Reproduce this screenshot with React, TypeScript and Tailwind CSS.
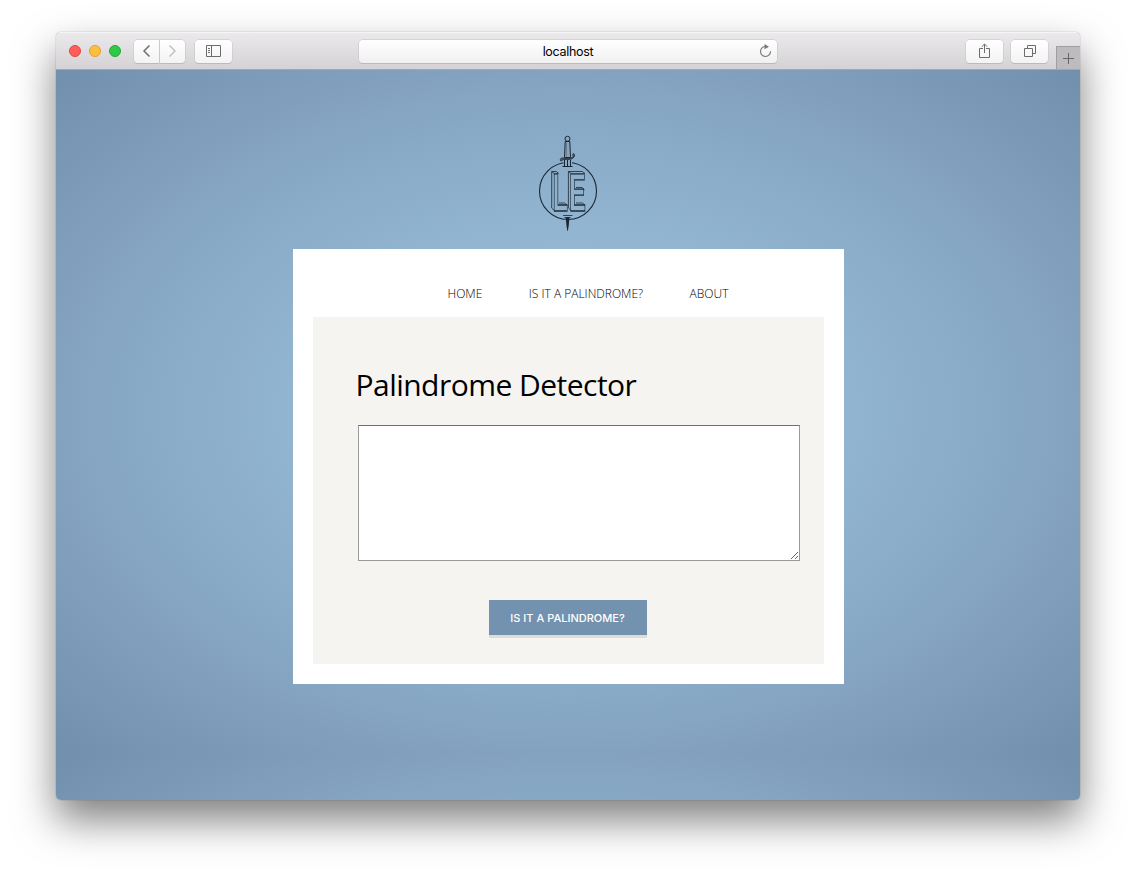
import type { ReactNode } from "react";

function ToolButton({ className, children }: { className: string; children: ReactNode }) {
  return (
    <button
      className={`flex h-[23px] items-center justify-center bg-linear-to-b from-white to-[#f3f3f3] shadow-[0_0_0_0.5px_#c4c2c4,0_1px_0_#b5b3b5] ${className}`}
    >
      {children}
    </button>
  );
}

function Toolbar() {
  return (
    <header className="flex h-[38px] shrink-0 items-center border-t border-b border-t-[#f6f5f6] border-b-[#a9a5a9] bg-linear-to-b from-[#ebe9eb] to-[#d4d2d4] pl-[13px]">
      <div className="flex w-[65px] gap-2">
        <span className="size-3 rounded-full border border-[#e2463f] bg-[#ff5f58]" />
        <span className="size-3 rounded-full border border-[#dfa033] bg-[#ffbe3c]" />
        <span className="size-3 rounded-full border border-[#23a833] bg-[#30c947]" />
      </div>
      <div className="flex gap-px">
        <ToolButton className="w-[25px] rounded-l-[4px]">
          <svg width="9" height="14" viewBox="0 0 9 14" fill="none" stroke="#6f6f6f" strokeWidth="1.5">
            <path d="M7.5 1.5 2 7l5.500 5.500" />
          </svg>
        </ToolButton>
        <ToolButton className="w-[25px] rounded-r-[4px]">
          <svg width="9" height="14" viewBox="0 0 9 14" fill="none" stroke="#bdbdbd" strokeWidth="1.4">
            <path d="M1.500 1.500 7 7l-5.500 5.500" />
          </svg>
        </ToolButton>
      </div>
      <ToolButton className="ml-[10px] w-[37px] rounded-[4px]">
        <svg width="16" height="13" viewBox="0 0 16 13" fill="none" stroke="#6c6c6c">
          <path d="M.5.5h14v11H.5zM5.500.5v11M2 3.500h2M2 5.500h2M2 7.500h2" />
        </svg>
      </ToolButton>
      <div className="ml-[127px] flex h-[23px] w-[418px] items-center rounded-[4px] bg-linear-to-b from-white to-[#f0f0f0] pr-[5px] pl-[18px] shadow-[0_0_0_0.5px_#c4c2c4,0_1px_0_#b5b3b5]">
        <span className="flex-1 text-center font-[Inter,sans-serif] text-[12.500px] leading-[23px] tracking-[-0.3px] text-black">
          localhost
        </span>
        <svg width="13" height="14" viewBox="0 0 13 14" fill="none" stroke="#777">
          <path d="M7 2.500A5 5 0 1 0 11.500 7.200" strokeWidth="1.100" />
          <path d="M5.500 0 10 2.700 5.500 5.300z" fill="#777" stroke="none" />
        </svg>
      </div>
      <ToolButton className="ml-[189px] w-[37px] rounded-[4px]">
        <svg width="12" height="16" viewBox="0 0 12 16" fill="none" stroke="#6c6c6c">
          <path d="M4 5.500H.5v9h10v-9H7M5.500 10V1.200M2.800 3.700l2.700-2.700 2.700 2.700" />
        </svg>
      </ToolButton>
      <ToolButton className="ml-2 w-[37px] rounded-[4px]">
        <svg width="12" height="12" viewBox="0 0 12 12" fill="none" stroke="#6c6c6c">
          <path d="M.5 3.500h8v8h-8zM3.500 3V.5h8v8H9" />
        </svg>
      </ToolButton>
      <button className="ml-auto flex h-[23px] w-6 items-center justify-center self-end border-t border-l border-[#a09ea0] bg-[#bdbbbd] pt-px">
        <svg width="11" height="11" viewBox="0 0 11 11" stroke="#666">
          <path d="M5.500 0v11M0 5.500h11" />
        </svg>
      </button>
    </header>
  );
}

function SwordLogo() {
  return (
    <svg className="overflow-visible opacity-99 will-change-transform" width="60" height="98" viewBox="538 134 60 98" fill="none" stroke="#192630">
      <circle cx="568" cy="191" r="28.500" strokeWidth="1.100" />
      <rect x="563.500" y="158" width="8.500" height="8" fill="#8aaac5" stroke="none" />
      <circle cx="567.500" cy="138.800" r="2.500" fill="#8aa9c2" />
      <path d="M565.200 141.500h4.600l.7 16h-6z" fill="#89a6bf" />
      <path d="M566.400 142.500v14" strokeWidth=".7" opacity=".5" />
      <path
        d="M560.500 160.800c-.7-2 .6-3.300 3-2.800 3.500.8 7 .5 9-.7 1.500-.9-.5-2.600.5-3.500 1.600-.7 2 1.700 1 3.200-2 3.200-6.500 2.500-10 2.500-1.500 0-1.500 1.500-3.500 1.300z"
        fill="#496174"
        strokeWidth=".8"
      />
      <path d="M564.500 160v6M567.500 160v6M570.500 160v6M562.500 166.500h10" />
      <text
        transform="translate(552.500 210.500) scale(.47 1)"
        fontFamily="Liberation Sans"
        fontWeight="700"
        fontSize="54"
        strokeWidth="1.300"
        textRendering="geometricPrecision"
      >
        L<tspan dx="2.300">E</tspan>
      </text>
      <path
        d="M554.300 173.500l-2.600-2v36.500l2.600 2.500M551.700 171.500h4.500l2.600 2M571 173.500l-2.600-2v36.500l2.600 2.500M568.400 171.500h14l2.600 2M559 203h5.500l2.600 2M576 187.500h6l2.600 2.500M576 203h6.500l2.500 2"
        strokeWidth=".8"
      />
      <path d="M563 215.500h9.500M564.500 217.500h6" strokeWidth=".8" />
      <path d="M565.700 217h3.800l-.8 9-.9 5h-.4l-.9-5z" fill="#192630" stroke="none" />
    </svg>
  );
}

export default function App() {
  return (
    <div className="h-[880px] w-[1136px] bg-white px-14 pt-8">
      <div className="flex h-[768px] w-[1024px] flex-col overflow-hidden rounded-[5px] shadow-[0_0_1px_rgba(0,0,0,0.6),0_20px_40px_rgba(0,0,0,0.5)]">
        <Toolbar />
        <main className="flex flex-1 flex-col items-center bg-[radial-gradient(ellipse_at_center,#a0c4e0_0%,#92b5d1_37%,#88aac7_59%,#82a0be_74%,#7190ae_100%)] bg-[length:100%_683px] bg-repeat-y pt-16 font-['Open_Sans',sans-serif] text-black">
          <SwordLogo />
          <section className="mt-[17px] flex h-[435px] w-[551px] flex-col bg-white p-5">
            <nav className="flex h-12 items-center gap-[46.500px] pt-0.5 pl-[135px] text-[12px] leading-4 font-light text-black">
              <a>HOME</a>
              <a>IS IT A PALINDROME?</a>
              <a>ABOUT</a>
            </nav>
            <div className="flex flex-1 flex-col bg-[#f5f4f0] pt-[47px] pl-[43px]">
              <h1 className="h-[61px] text-[30px] leading-[42px] tracking-[-0.53px]">Palindrome Detector</h1>
              <textarea className="ml-0.5 block h-[136px] w-[442px] resize border border-[#999] border-t-[#707070] bg-white" />
              <button className="mt-[39px] ml-[133px] h-[35px] w-[158px] bg-[#7392af] pt-0.5 font-[Inter,sans-serif] text-[11px] font-medium text-white shadow-[0_3px_0_#dfdcd8]">
                IS IT A PALINDROME?
              </button>
            </div>
          </section>
        </main>
      </div>
    </div>
  );
}
